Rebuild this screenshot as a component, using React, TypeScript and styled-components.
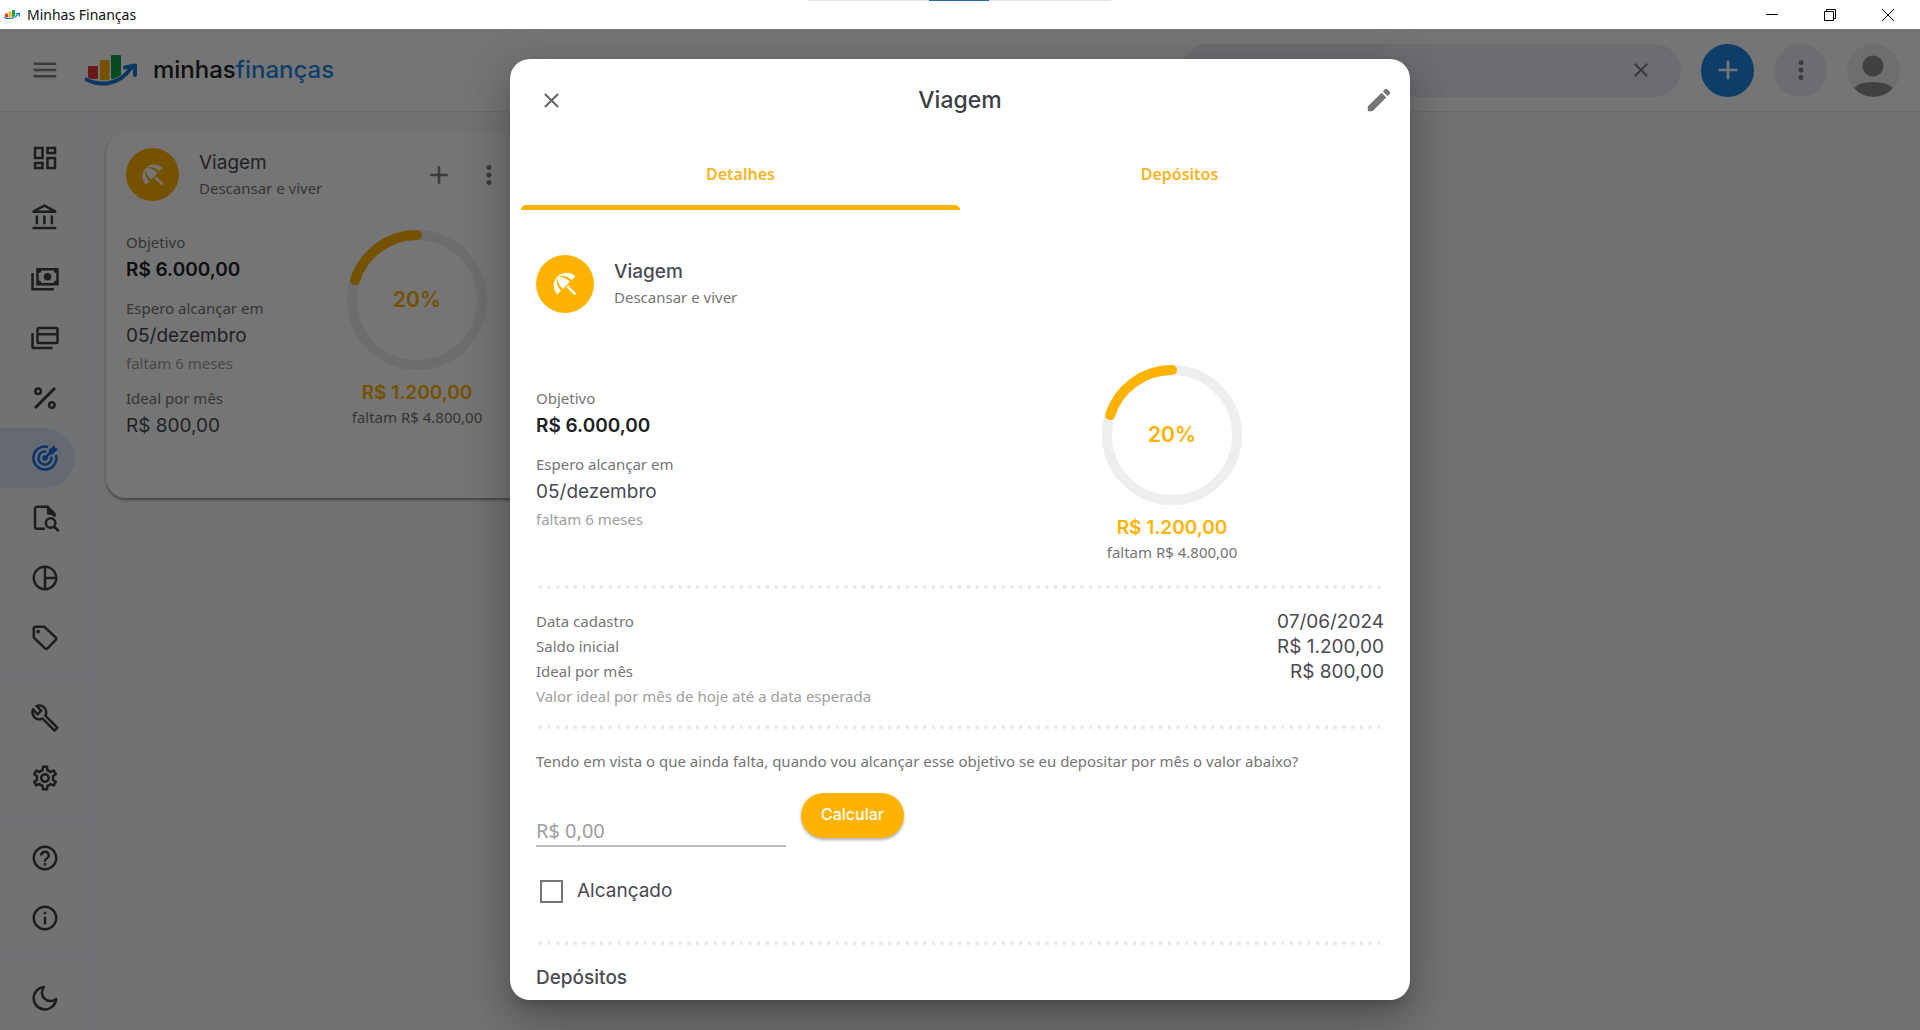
import React from "react";
import styled, { createGlobalStyle, css } from "styled-components";
import {
  MdAdd,
  MdBeachAccess,
  MdClose,
  MdEdit,
  MdHelpOutline,
  MdInfoOutline,
  MdMenu,
  MdMoreVert,
  MdOutlineAccountBalance,
  MdOutlineBuild,
  MdOutlineDashboard,
  MdOutlinePieChart,
  MdOutlineSettings,
  MdSearch,
} from "react-icons/md";

const display = `Inter, "Open Sans", sans-serif`;
const body = `"Noto Sans", "Open Sans", sans-serif`;
const amber = "#ffb300";
const ink = "#4a4a52";
const muted = "#757575";
const faint = "#9e9e9e";

const GlobalStyle = createGlobalStyle`
  *, *::before, *::after { box-sizing: border-box; }
  body { margin: 0; background: #f6f8fc; font-family: ${body}; font-size: 15px; color: ${ink}; }
  h1, h2, h3, p, ul, dl, dd { margin: 0; padding: 0; }
  ul { list-style: none; }
  a { color: inherit; text-decoration: none; }
  button, input { font: inherit; color: inherit; }
  button { border: 0; padding: 0; background: none; cursor: pointer; }
  svg { display: block; flex: none; }
`;

/* ---------- window frame ---------- */

const Window = styled.div`
  display: flex;
  flex-direction: column;
  height: 100vh;
  overflow: hidden;
`;

const TitleBar = styled.div`
  position: relative;
  display: flex;
  align-items: center;
  gap: 7px;
  flex: none;
  height: 29px;
  padding: 0 3px 0 4px;
  background: #fff;
  color: #111;
  font-size: 14px;
`;

const WindowTitle = styled.span`
  flex: 1;
`;

const DragHandle = styled.span`
  position: absolute;
  top: 0;
  left: 50%;
  width: 303px;
  height: 1px;
  margin-left: -152px;
  background: linear-gradient(90deg, #e3e3e3 0 121px, #2a6aa5 121px 181px, #e3e3e3 181px);
`;

const WindowButtons = styled.div`
  display: flex;
`;

const WindowButton = styled.button`
  display: grid;
  place-items: center;
  width: 58px;
  height: 29px;
`;

const Client = styled.div`
  position: relative;
  display: flex;
  flex-direction: column;
  flex: 1;
  min-height: 0;
`;

/* ---------- application header ---------- */

const Header = styled.header`
  display: flex;
  align-items: center;
  gap: 20px;
  flex: none;
  height: 83px;
  padding: 0 20px 0 25px;
  background: #fff;
  border-bottom: 1px solid #e8eaf0;
`;

const IconButton = styled.button<{ $width?: number; $color?: string }>`
  display: grid;
  place-items: center;
  width: ${(p) => p.$width ?? 40}px;
  height: 40px;
  color: ${(p) => p.$color ?? "#808080"};
`;

const Brand = styled.a`
  display: flex;
  align-items: center;
  gap: 16px;
  flex: 1;
  color: #202124;
  font: 500 24px/32px ${display};

  em {
    font-style: normal;
    color: #1e88e5;
  }
`;

const Search = styled.label`
  display: flex;
  align-items: center;
  gap: 12px;
  width: 500px;
  height: 53px;
  padding: 0 20px 0 22px;
  border-radius: 27px;
  background: #ebeef7;
  color: #555;

  input {
    flex: 1;
    min-width: 0;
    border: 0;
    outline: 0;
    background: none;
  }
`;

const RoundButton = styled.button<{ $bg: string; $color: string }>`
  display: grid;
  place-items: center;
  flex: none;
  width: 53px;
  height: 53px;
  border-radius: 50%;
  overflow: hidden;
  background: ${(p) => p.$bg};
  color: ${(p) => p.$color};
`;

/* ---------- side navigation ---------- */

const Main = styled.div`
  display: flex;
  flex: 1;
  min-height: 0;
`;

const Sidebar = styled.nav`
  flex: none;
  width: 91px;
  padding-top: 16px;
  border-right: 1px solid #eceef3;
  color: #3c4043;
`;

const NavGroup = styled.ul`
  & + & {
    margin-top: 10px;
    padding-top: 9px;
    border-top: 1px solid #eceef3;
  }
`;

const NavLink = styled.a<{ $active?: boolean }>`
  display: flex;
  align-items: center;
  width: 75px;
  height: 60px;
  padding-left: 30px;
  border-radius: 0 30px 30px 0;
  ${(p) =>
    p.$active &&
    css`
      background: #dce8f8;
      color: #1a73e8;
    `}
`;

/* ---------- goal pieces shared by card and dialog ---------- */

const Content = styled.main`
  flex: 1;
  padding: 21px 15px;
`;

const Card = styled.article`
  width: 423px;
  min-height: 365px;
  padding: 15px 20px;
  border-radius: 20px;
  background: #fff;
  box-shadow: 0 2px 3px rgba(0, 0, 0, 0.4);
`;

const GoalHead = styled.div`
  display: flex;
  align-items: center;
`;

const Badge = styled.span<{ $size: number }>`
  display: grid;
  place-items: center;
  flex: none;
  width: ${(p) => p.$size}px;
  height: ${(p) => p.$size}px;
  margin-right: 20px;
  border-radius: 50%;
  background: ${amber};
  color: #fff;
`;

const GoalNames = styled.div`
  flex: 1;
`;

const GoalTitle = styled.h2<{ $strong?: boolean }>`
  font: ${(p) => (p.$strong ? 500 : 400)} 19px/26px ${display};
`;

const Caption = styled.p<{ $color?: string }>`
  line-height: 24px;
  color: ${(p) => p.$color ?? muted};
`;

const Value = styled.p<{ $strong?: boolean }>`
  padding-top: 1px;
  font: ${(p) => (p.$strong ? 600 : 400)} 19px/30px ${display};
  color: ${(p) => (p.$strong ? "#202124" : ink)};
`;

const CardBody = styled.div`
  display: flex;
  justify-content: space-between;
  padding: 29px 22px 0 0;
`;

const Facts = styled.div`
  > div {
    margin-bottom: 11px;
  }
`;

const Progress = styled.div`
  display: flex;
  flex-direction: column;
  align-items: center;
`;

const RingBox = styled.div`
  display: grid;
  place-items: center;
  margin-bottom: 8px;

  > * {
    grid-area: 1 / 1;
  }
`;

const Percent = styled.strong`
  color: ${amber};
  font: 600 21px/30px ${display};
`;

const Saved = styled.strong`
  color: ${amber};
  font: 600 19px/30px ${display};
`;

const Missing = styled.span`
  padding-bottom: 2px;
  line-height: 18px;
  color: ${muted};
`;

/* ---------- dialog ---------- */

const Backdrop = styled.div`
  position: absolute;
  inset: 0;
  display: flex;
  justify-content: center;
  padding: 30px 0;
  background: rgba(0, 0, 0, 0.54);
`;

const Dialog = styled.section`
  display: flex;
  flex-direction: column;
  width: 900px;
  max-width: 100%;
  overflow: hidden;
  border-radius: 20px;
  background: #fff;
  box-shadow: 0 11px 15px -7px rgba(0, 0, 0, 0.2), 0 24px 38px 3px rgba(0, 0, 0, 0.14),
    0 9px 46px 8px rgba(0, 0, 0, 0.12);
`;

const DialogHeader = styled.div`
  display: grid;
  grid-template-columns: 1fr auto 1fr;
  align-items: center;
  flex: none;
  height: 82px;
  padding: 0 11px;

  > :last-child {
    justify-self: end;
  }
`;

const DialogTitle = styled.h1`
  color: #3c4043;
  font: 500 23px/32px ${display};
`;

const Tabs = styled.div`
  display: grid;
  grid-template-columns: 1fr 1fr;
  flex: none;
  padding: 0 11px;
`;

const Tab = styled.button`
  position: relative;
  height: 69px;
  padding-bottom: 4px;
  color: #fab31e;
  font-weight: 600;
  font-size: 16px;

  &[aria-selected="true"]::after {
    content: "";
    position: absolute;
    inset: auto 0 0;
    height: 5px;
    border-radius: 5px 5px 0 0;
    background: ${amber};
  }
`;

const DialogBody = styled.div`
  flex: 1;
  min-height: 0;
  overflow-y: auto;
  padding: 45px 26px 0;
`;

const Summary = styled.div`
  display: grid;
  grid-template-columns: 1fr 1fr;
  align-items: center;
  padding: 52px 0 5px;
`;

const Divider = styled.hr`
  height: 4px;
  margin: 17px 0 20px;
  border: 0;
  background: radial-gradient(circle at center, #e8e8e8 0 1px, #ececec 2px, transparent 2px) 0 0 / calc(100% / 97) 4px;
`;

const Details = styled.dl`
  display: grid;
  grid-template-columns: 1fr auto;
  line-height: 25px;

  dt {
    color: ${muted};
  }

  dd {
    text-align: right;
    font: 400 19px/25px ${display};
  }
`;

const Calculator = styled.form`
  display: flex;
  align-items: flex-start;
  gap: 15px;
  margin-top: 20px;
`;

const MoneyInput = styled.input`
  width: 250px;
  height: 54px;
  padding: 22px 0 0;
  border: 0;
  border-bottom: 2px solid #bdbdbd;
  outline: 0;
  background: none;
  font-size: 20px;

  &::placeholder {
    color: ${faint};
    opacity: 1;
  }
`;

const PrimaryButton = styled.button`
  height: 45px;
  padding: 0 20px 3px;
  border-radius: 23px;
  background: ${amber};
  color: #fff;
  font: 500 16px/24px ${display};
  box-shadow: 0 2px 3px rgba(0, 0, 0, 0.3);
`;

const CheckRow = styled.label`
  display: flex;
  align-items: center;
  gap: 14px;
  margin: 24px 0 30px;
  padding-left: 4px;
  font: 400 19px/40px ${display};

  input {
    appearance: none;
    width: 23px;
    height: 23px;
    margin: 0;
    border: 2px solid #757575;
  }
`;

/* ---------- drawings ---------- */

const Logo = ({ width }: { width: number }) => (
  <svg width={width} viewBox="0 0 52 31" aria-hidden="true">
    <rect x="3" y="11" width="10" height="13" rx="1" fill="#e53935" />
    <rect x="15" y="5" width="9.500" height="20" rx="1" fill="#ffb300" />
    <rect x="26" y="0" width="10" height="24" rx="1" fill="#12a150" />
    <path d="M1.500 24.500C14 31 34 31 46 13" fill="none" stroke="#fff" strokeWidth="5" />
    <path
      d="M1.500 24.500C14 31 34 31 46 13"
      fill="none"
      stroke="#1976d2"
      strokeWidth="4"
      strokeLinecap="round"
    />
    <path
      d="M40 12.500L50 10.500L50 20"
      fill="none"
      stroke="#1976d2"
      strokeWidth="4"
      strokeLinecap="round"
      strokeLinejoin="round"
    />
  </svg>
);

const Glyph = ({ children }: { children: React.ReactNode }) => (
  <svg width="30" height="30" viewBox="0 0 24 24" fill="currentColor" aria-hidden="true">
    {children}
  </svg>
);

const line = { fill: "none", stroke: "currentColor", strokeWidth: 2 } as const;

const CashIcon = () => (
  <Glyph>
    <path d="M5 4h18v14H5V4m9 4a3 3 0 0 1 3 3 3 3 0 0 1-3 3 3 3 0 0 1-3-3 3 3 0 0 1 3-3M9 6a2 2 0 0 1-2 2v6a2 2 0 0 1 2 2h10a2 2 0 0 1 2-2V8a2 2 0 0 1-2-2H9M1 8h2v12h16v2H1V8z" />
  </Glyph>
);

const CardsIcon = () => (
  <Glyph>
    <path d="M21 8V5H7v3h14m0 7v-5H7v5h14m0-12a2 2 0 0 1 2 2v10a2 2 0 0 1-2 2H7a2 2 0 0 1-2-2V5a2 2 0 0 1 2-2h14M3 19h15v2H3a2 2 0 0 1-2-2V8h2v11z" />
  </Glyph>
);

const PercentIcon = () => (
  <Glyph>
    <g {...line}>
      <path d="M4 20L20 4" strokeWidth="2.400" />
      <circle cx="6.500" cy="6.500" r="2.200" />
      <circle cx="17.500" cy="17.500" r="2.200" />
    </g>
  </Glyph>
);

const TargetIcon = () => (
  <Glyph>
    <g {...line}>
      <path d="M14.500 3.200A9.200 9.200 0 1 0 20.800 9.500" />
      <path d="M13 6.900A5.200 5.200 0 1 0 17.100 11" />
      <path d="M12 12L17 7" />
    </g>
    <circle cx="12" cy="12" r="2.200" />
    <path d="M15 5.500L19.500 1.500 20 4 22.500 4.500 18.500 9H15z" />
  </Glyph>
);

const FileSearchIcon = () => (
  <Glyph>
    <path d="M12 20.500H5.500A1.500 1.500 0 0 1 4 19V4.500A1.500 1.500 0 0 1 5.500 3H14L19.500 8.500V11" {...line} />
    <path d="M13.500 2L20.500 9V10.500L13.500 9z" />
    <g {...line}>
      <circle cx="16.500" cy="16" r="3.800" />
      <path d="M19.200 18.800L23 22.500" strokeWidth="2.200" />
    </g>
  </Glyph>
);

const TagIcon = () => (
  <Glyph>
    <path
      d="M3 4.500A1.200 1.200 0 0 1 4.200 3H11.500L20.700 11.600A1.500 1.500 0 0 1 20.700 13.400L14 20.300A1.500 1.500 0 0 1 12 20.300L3 11.500z"
      {...line}
    />
    <circle cx="6.500" cy="6.800" r="1.500" />
  </Glyph>
);

const MoonIcon = () => (
  <Glyph>
    <path d="M11.200 3.200a6.800 6.800 0 0 0 9.700 9.500A9 9 0 1 1 11.200 3.200z" {...line} strokeLinejoin="round" />
  </Glyph>
);

const Avatar = () => (
  <svg width="53" height="53" viewBox="0 0 53 53" fill="#8f8f8f" aria-hidden="true">
    <circle cx="26" cy="22" r="10.500" />
    <path d="M7 44Q12 38 26 38T46 44Q38 53 26.500 53T7 44z" />
  </svg>
);

const Ring = ({ value }: { value: number }) => {
  const radius = 65;
  const length = 2 * Math.PI * radius;
  return (
    <svg width="140" height="140" viewBox="0 0 140 140" fill="none" strokeWidth="10" aria-hidden="true">
      <circle cx="70" cy="70" r={radius} stroke="#eee" />
      <circle
        cx="70"
        cy="70"
        r={radius}
        stroke={amber}
        strokeLinecap="round"
        strokeDasharray={`${(length * value) / 100} ${length}`}
        transform="matrix(0 -1 -1 0 140 140)"
      />
    </svg>
  );
};

const GoalProgress = () => (
  <Progress>
    <RingBox>
      <Ring value={20} />
      <Percent>20%</Percent>
    </RingBox>
    <Saved>R$ 1.200,00</Saved>
    <Missing>faltam R$ 4.800,00</Missing>
  </Progress>
);

const GoalFacts = ({ monthly }: { monthly?: boolean }) => (
  <Facts>
    <div>
      <Caption>Objetivo</Caption>
      <Value $strong>R$ 6.000,00</Value>
    </div>
    <div>
      <Caption>Espero alcançar em</Caption>
      <Value>05/dezembro</Value>
      <Caption $color={faint}>faltam 6 meses</Caption>
    </div>
    {monthly && (
      <div>
        <Caption>Ideal por mês</Caption>
        <Value>R$ 800,00</Value>
      </div>
    )}
  </Facts>
);

type NavEntry = { label: string; icon: React.ReactNode; active?: boolean };

const navigation: NavEntry[][] = [
  [
    { label: "Visão geral", icon: <MdOutlineDashboard size={30} /> },
    { label: "Contas", icon: <MdOutlineAccountBalance size={30} /> },
    { label: "Lançamentos", icon: <CashIcon /> },
    { label: "Cartões", icon: <CardsIcon /> },
    { label: "Orçamentos", icon: <PercentIcon /> },
    { label: "Objetivos", icon: <TargetIcon />, active: true },
    { label: "Relatórios", icon: <FileSearchIcon /> },
    { label: "Gráficos", icon: <MdOutlinePieChart size={30} /> },
    { label: "Categorias", icon: <TagIcon /> },
  ],
  [
    { label: "Ferramentas", icon: <MdOutlineBuild size={30} /> },
    { label: "Configurações", icon: <MdOutlineSettings size={30} /> },
  ],
  [
    { label: "Ajuda", icon: <MdHelpOutline size={30} /> },
    { label: "Sobre", icon: <MdInfoOutline size={30} /> },
  ],
  [{ label: "Tema escuro", icon: <MoonIcon /> }],
];

export default function App() {
  return (
    <Window>
      <GlobalStyle />
      <TitleBar>
        <Logo width={16} />
        <WindowTitle>Minhas Finanças</WindowTitle>
        <DragHandle />
        <WindowButtons>
          <WindowButton aria-label="Minimizar">
            <svg width="12" height="12" stroke="#000">
              <path d="M0 5.500H12" />
            </svg>
          </WindowButton>
          <WindowButton aria-label="Restaurar">
            <svg width="12" height="12" fill="none" stroke="#000">
              <path d="M.5 2.500H9.500V11.500H.5zM2.500 2.500V.5H11.500V9.500H9.500" />
            </svg>
          </WindowButton>
          <WindowButton aria-label="Fechar">
            <svg width="12" height="12" stroke="#000">
              <path d="M0 0L12 12M12 0L0 12" />
            </svg>
          </WindowButton>
        </WindowButtons>
      </TitleBar>

      <Client>
        <Header>
          <IconButton aria-label="Menu">
            <MdMenu size={30} />
          </IconButton>
          <Brand href="#">
            <Logo width={52} />
            <span>
              minhas<em>finanças</em>
            </span>
          </Brand>
          <Search>
            <MdSearch size={28} />
            <input type="text" aria-label="Pesquisar" />
            <IconButton type="button" aria-label="Limpar">
              <MdClose size={24} />
            </IconButton>
          </Search>
          <RoundButton $bg="#1e88e5" $color="#fff" aria-label="Adicionar">
            <MdAdd size={32} />
          </RoundButton>
          <RoundButton $bg="#ebeef7" $color="#808080" aria-label="Mais opções">
            <MdMoreVert size={30} />
          </RoundButton>
          <RoundButton $bg="#f0f0f0" $color="#888" aria-label="Perfil">
            <Avatar />
          </RoundButton>
        </Header>

        <Main>
          <Sidebar>
            {navigation.map((group) => (
              <NavGroup key={group[0].label}>
                {group.map((item) => (
                  <li key={item.label}>
                    <NavLink href="#" aria-label={item.label} $active={item.active}>
                      {item.icon}
                    </NavLink>
                  </li>
                ))}
              </NavGroup>
            ))}
          </Sidebar>

          <Content>
            <Card>
              <GoalHead>
                <Badge $size={53}>
                  <MdBeachAccess size={28} />
                </Badge>
                <GoalNames>
                  <GoalTitle>Viagem</GoalTitle>
                  <Caption>Descansar e viver</Caption>
                </GoalNames>
                <IconButton $width={60} aria-label="Adicionar depósito">
                  <MdAdd size={30} />
                </IconButton>
                <IconButton aria-label="Opções do objetivo">
                  <MdMoreVert size={30} />
                </IconButton>
              </GoalHead>
              <CardBody>
                <GoalFacts monthly />
                <GoalProgress />
              </CardBody>
            </Card>
          </Content>
        </Main>

        <Backdrop>
          <Dialog role="dialog" aria-labelledby="goal-title">
            <DialogHeader>
              <IconButton $width={60} $color="#666" aria-label="Fechar">
                <MdClose size={25} />
              </IconButton>
              <DialogTitle id="goal-title">Viagem</DialogTitle>
              <IconButton $color="#757575" aria-label="Editar">
                <MdEdit size={30} />
              </IconButton>
            </DialogHeader>
            <Tabs role="tablist">
              <Tab role="tab" aria-selected="true">
                Detalhes
              </Tab>
              <Tab role="tab" aria-selected="false">
                Depósitos
              </Tab>
            </Tabs>
            <DialogBody>
              <GoalHead>
                <Badge $size={58}>
                  <MdBeachAccess size={30} />
                </Badge>
                <GoalNames>
                  <GoalTitle $strong>Viagem</GoalTitle>
                  <Caption>Descansar e viver</Caption>
                </GoalNames>
              </GoalHead>
              <Summary>
                <GoalFacts />
                <GoalProgress />
              </Summary>
              <Divider />
              <Details>
                <dt>Data cadastro</dt>
                <dd>07/06/2024</dd>
                <dt>Saldo inicial</dt>
                <dd>R$ 1.200,00</dd>
                <dt>Ideal por mês</dt>
                <dd>R$ 800,00</dd>
              </Details>
              <Caption $color={faint}>Valor ideal por mês de hoje até a data esperada</Caption>
              <Divider />
              <Caption as="label" htmlFor="monthly-deposit">
                Tendo em vista o que ainda falta, quando vou alcançar esse objetivo se eu depositar por mês o valor
                abaixo?
              </Caption>
              <Calculator>
                <MoneyInput id="monthly-deposit" type="text" placeholder="R$ 0,00" />
                <PrimaryButton type="button">Calcular</PrimaryButton>
              </Calculator>
              <CheckRow>
                <input type="checkbox" />
                Alcançado
              </CheckRow>
              <Divider />
              <GoalTitle $strong>Depósitos</GoalTitle>
            </DialogBody>
          </Dialog>
        </Backdrop>
      </Client>
    </Window>
  );
}
